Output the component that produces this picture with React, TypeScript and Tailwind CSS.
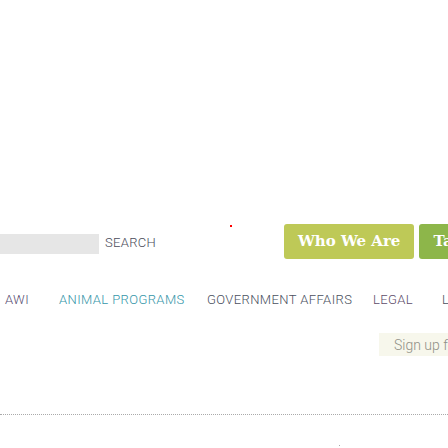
import React from "react";

export default function App() {
  const cond = {
    fontFamily: "Roboto, 'Liberation Sans', sans-serif",
    fontWeight: 300,
  } as React.CSSProperties;
  const serif = { fontFamily: "'DejaVu Serif', 'Liberation Serif', serif" } as React.CSSProperties;
  return (
    <div className="w-[448px] h-[448px] overflow-hidden bg-white flex flex-col">
      <div className="h-[224px] shrink-0" />
      {/* header row */}
      <div className="flex items-start h-[35px] shrink-0">
        <div className="w-[99px] h-[20px] mt-[10px] bg-[#e6e6e6] shrink-0" />
        <span
          className="ml-[6px] mt-[12px] text-[13px] leading-[14px] tracking-[0.3px] text-[#4a4c5a] whitespace-nowrap"
          style={cond}
        >
          SEARCH
        </span>
        <div className="ml-[74px] mt-[1px] w-[2px] h-[2px] bg-[#ff0000] shrink-0" />
        <div className="ml-[52px] flex gap-[5px] shrink-0">
          <div
            className="h-[35px] px-[14px] rounded-[3px] bg-[#bec957] text-white font-bold text-[15px] flex items-center whitespace-nowrap"
            style={serif}
          >
            Who We Are
          </div>
          <div
            className="h-[35px] px-[14px] rounded-[3px] bg-[#8db64a] text-white font-bold text-[15px] flex items-center whitespace-nowrap"
            style={serif}
          >
            Take Action
          </div>
        </div>
      </div>
      {/* nav row */}
      <nav
        className="mt-[34px] flex items-center h-[14px] text-[13px] leading-[14px] tracking-[0.4px] whitespace-nowrap shrink-0 pl-[5px]"
        style={cond}
      >
        <span className="w-[54px] shrink-0 text-[#574d72]">AWI</span>
        <span className="w-[148px] shrink-0 text-[#3596a9]">ANIMAL PROGRAMS</span>
        <span className="w-[166px] shrink-0 text-[#4a505e]">GOVERNMENT AFFAIRS</span>
        <span className="w-[69px] shrink-0 text-[#5d4c6a]">LEGAL</span>
        <span className="shrink-0 text-[#4a505e]">LIBRARY</span>
      </nav>
      {/* sign up */}
      <div className="mt-[26px] flex shrink-0">
        <div className="ml-[379px] h-[23px] pl-[15px] bg-[#f7f7ec] flex items-center whitespace-nowrap">
          <span className="text-[14px] leading-[16px] text-[#8f8f86]" style={cond}>
            Sign up for our newsletter
          </span>
        </div>
      </div>
      {/* dotted line */}
      <div className="mt-[58px] border-t border-dotted border-[#aaaaaa] shrink-0" />
      <div className="mt-[30px] ml-[339px] w-[1px] h-[1px] bg-[#aaaaaa] shrink-0" />
    </div>
  );
}
